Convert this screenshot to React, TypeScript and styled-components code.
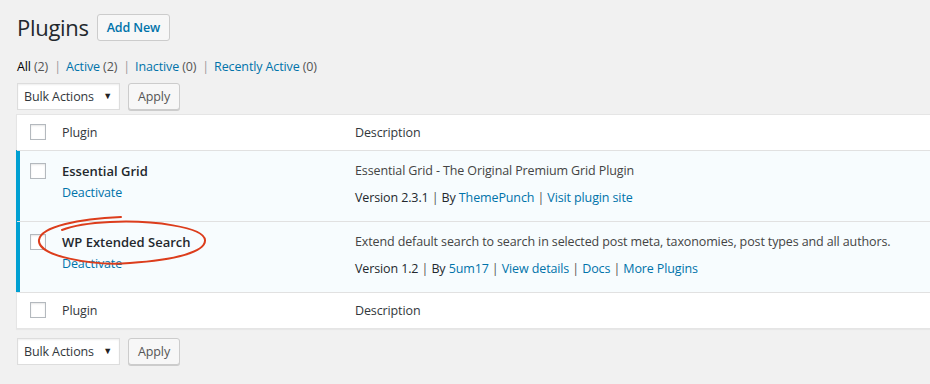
import React from 'react';
import styled, { createGlobalStyle, css } from 'styled-components';

const GlobalStyle = createGlobalStyle`
    html, body {
        margin: 0;
        padding: 0;
        background: #f1f1f1;
        overflow: hidden;
    }
    body {
        font-family: 'Open Sans', 'Noto Sans', sans-serif;
        font-size: 12.5px;
        letter-spacing: -0.12px;
        line-height: 20px;
        color: #444;
    }
`;

const Wrap = styled.div`
    position: relative;
    padding: 14px 0 20px 16px;
    width: 1000px;
`;

const HeadingRow = styled.div`
    display: flex;
    align-items: center;
    gap: 8px;
    height: 27px;
    padding-left: 1px;
`;

const Title = styled.h1`
    margin: 0;
    font-size: 22px;
    font-weight: 400;
    letter-spacing: -0.3px;
    line-height: 27px;
    color: #23282d;
`;

const Button = styled.button<{ $primary?: boolean }>`
    height: 27px;
    padding: 0 9px;
    border: 1px solid #ccc;
    border-radius: 3px;
    background: #f7f7f7;
    box-shadow: 0 1px 0 #ccc;
    font-family: inherit;
    font-size: 12.5px;
    letter-spacing: -0.12px;
    color: #555;
    cursor: pointer;
    ${(p) =>
        p.$primary &&
        css`
            color: #0073aa;
            font-weight: 600;
            box-shadow: none;
        `}
`;

const Views = styled.ul`
    display: flex;
    margin: 16px 0 0 1px;
    padding: 0;
    list-style: none;
    color: #666;
    white-space: pre;
`;

const ViewItem = styled.li`
    display: flex;
    & + &::before {
        content: '|';
        color: #999;
        margin: 0 5px 0 6px;
    }
`;

const ViewLink = styled.a<{ $current?: boolean }>`
    color: ${(p) => (p.$current ? '#000' : '#0073aa')};
    text-decoration: none;
`;

const Count = styled.span`
    color: #555;
`;

const BulkBar = styled.div<{ $bottom?: boolean }>`
    display: flex;
    gap: 8px;
    margin-top: ${(p) => (p.$bottom ? '9px' : '6px')};
    margin-left: 1px;
`;

const Select = styled.div`
    display: flex;
    align-items: center;
    justify-content: space-between;
    box-sizing: border-box;
    width: 103px;
    height: 27px;
    padding: 0 7px 0 6px;
    border: 1px solid #ddd;
    background: #fff;
    box-shadow: inset 0 1px 2px rgba(0, 0, 0, 0.07);
    color: #32373c;
`;

const Caret = styled.span`
    font-size: 9px;
    color: #222;
    margin-top: -2px;
`;

const Table = styled.div`
    margin-top: 4px;
    border: 1px solid #e5e5e5;
    background: #fff;
    box-shadow: 0 1px 1px rgba(0, 0, 0, 0.04);
`;

const Row = styled.div<{ $active?: boolean; $head?: boolean }>`
    display: grid;
    grid-template-columns: 35px 293px 1fr;
    border-top: ${(p) => (p.$head ? '0' : '1px solid #e1e1e1')};
    ${(p) =>
        p.$active &&
        css`
            background: #f7fcfe;
            box-shadow: -1px 0 0 #00a0d2, inset 3px 0 0 #00a0d2;
        `}
`;

const CheckCell = styled.div<{ $head?: boolean }>`
    padding: ${(p) => (p.$head ? '9px 0 0 13px' : '12px 0 0 13px')};
`;

const Checkbox = styled.span`
    display: block;
    box-sizing: border-box;
    width: 16px;
    height: 16px;
    border: 1px solid #b4b9be;
    background: #fff;
    box-shadow: inset 0 1px 2px rgba(0, 0, 0, 0.1);
`;

const HeadCell = styled.div`
    padding: 8px 10px 7px;
    color: #32373c;
`;

const Cell = styled.div`
    padding: 10px 10px 13px;
    white-space: pre;
`;

const PluginName = styled.div`
    font-size: 13px;
    font-weight: 600;
    letter-spacing: 0;
    color: #23282d;
`;

const RowActions = styled.div`
    margin-top: 2px;
`;

const Link = styled.a`
    color: #0073aa;
    text-decoration: none;
`;

const Desc = styled.div`
    color: #444;
`;

const Meta = styled.div`
    margin-top: 7px;
    color: #23282d;
`;

const Sep = styled.span`
    color: #555;
`;

const Annotation = styled.svg`
    position: absolute;
    left: 0;
    top: 0;
    pointer-events: none;
`;

type Plugin = {
    name: string;
    description: string;
    version: string;
    author: string;
    links: string[];
};

const plugins: Plugin[] = [
    {
        name: 'Essential Grid',
        description: 'Essential Grid - The Original Premium Grid Plugin',
        version: '2.3.1',
        author: 'ThemePunch',
        links: ['Visit plugin site'],
    },
    {
        name: 'WP Extended Search',
        description:
            'Extend default search to search in selected post meta, taxonomies, post types and all authors.',
        version: '1.2',
        author: '5um17',
        links: ['View details', 'Docs', 'More Plugins'],
    },
];

const BulkActions = ({ bottom }: { bottom?: boolean }) => (
    <BulkBar $bottom={bottom}>
        <Select>
            Bulk Actions <Caret>▼</Caret>
        </Select>
        <Button>Apply</Button>
    </BulkBar>
);

const ColumnHeaders = ({ foot }: { foot?: boolean }) => (
    <Row $head={!foot}>
        <CheckCell $head>
            <Checkbox />
        </CheckCell>
        <HeadCell>Plugin</HeadCell>
        <HeadCell>Description</HeadCell>
    </Row>
);

const views = [
    { label: 'All', count: 2, current: true },
    { label: 'Active', count: 2 },
    { label: 'Inactive', count: 0 },
    { label: 'Recently Active', count: 0 },
];

export default function App() {
    return (
        <Wrap>
            <GlobalStyle />
            <HeadingRow>
                <Title>Plugins</Title>
                <Button $primary>Add New</Button>
            </HeadingRow>
            <Views>
                {views.map((v) => (
                    <ViewItem key={v.label}>
                        <ViewLink $current={v.current}>{v.label}</ViewLink>
                        <Count> ({v.count})</Count>
                    </ViewItem>
                ))}
            </Views>
            <BulkActions />
            <Table>
                <ColumnHeaders />
                {plugins.map((p) => (
                    <Row $active key={p.name}>
                        <CheckCell>
                            <Checkbox />
                        </CheckCell>
                        <Cell>
                            <PluginName>{p.name}</PluginName>
                            <RowActions>
                                <Link>Deactivate</Link>
                            </RowActions>
                        </Cell>
                        <Cell>
                            <Desc>{p.description}</Desc>
                            <Meta>
                                Version {p.version}
                                <Sep> | </Sep>By <Link>{p.author}</Link>
                                {p.links.map((l) => (
                                    <React.Fragment key={l}>
                                        <Sep> | </Sep>
                                        <Link>{l}</Link>
                                    </React.Fragment>
                                ))}
                            </Meta>
                        </Cell>
                    </Row>
                ))}
                <ColumnHeaders foot />
            </Table>
            <BulkActions bottom />
            <Annotation width="930" height="384" viewBox="0 0 930 384">
                <path
                    d="M121 217 C 80 219, 41 226, 39 240 C 37 256, 92 266, 130 263 C 175 260, 206 252, 205 240 C 204 227, 152 220, 110 222 C 90 223, 72 226, 62 230"
                    fill="none"
                    stroke="#dc3d1c"
                    strokeWidth="2"
                    strokeLinecap="round"
                />
            </Annotation>
        </Wrap>
    );
}
